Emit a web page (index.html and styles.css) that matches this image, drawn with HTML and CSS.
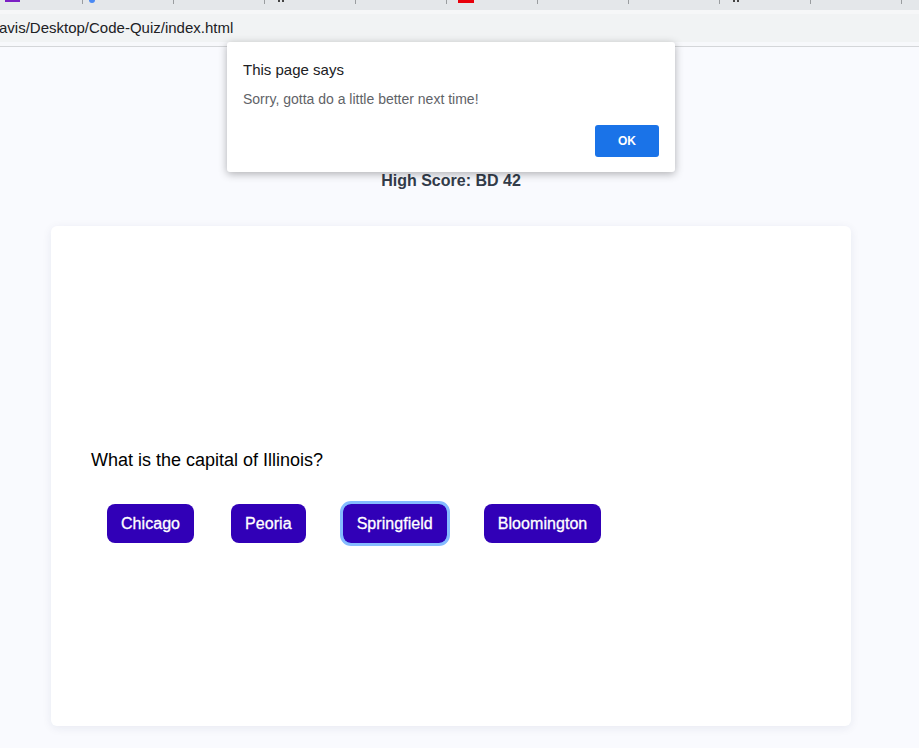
FILE: index.html
```html
<!DOCTYPE html>
<html>
<head>
<meta charset="utf-8">
<link rel="stylesheet" href="styles.css">
</head>
<body>
<div class="chrome">
  <div class="tabs">
    <div class="tab"><span class="fav fav-purple"></span></div>
    <div class="tab"><span class="fav fav-blue"></span></div>
    <div class="tab"></div>
    <div class="tab"><span class="fav fav-marks"></span></div>
    <div class="tab"></div>
    <div class="tab"><span class="fav fav-red"></span></div>
    <div class="tab"></div>
    <div class="tab"></div>
    <div class="tab"><span class="fav fav-marks"></span></div>
    <div class="tab"></div>
  </div>
  <div class="gap"></div>
  <div class="address">avis/Desktop/Code-Quiz/index.html</div>
  <div class="under"></div>
</div>
<main class="page">
  <p class="highscore">High Score: BD 42</p>
  <section class="card">
    <p class="question">What is the capital of Illinois?</p>
    <div class="answers">
      <button class="answer">Chicago</button>
      <button class="answer">Peoria</button>
      <button class="answer focused">Springfield</button>
      <button class="answer">Bloomington</button>
    </div>
  </section>
</main>
<div class="dialog">
  <div class="dialog-title">This page says</div>
  <div class="dialog-msg">Sorry, gotta do a little better next time!</div>
  <div class="dialog-actions"><button class="ok">OK</button></div>
</div>
</body>
</html>
```
FILE: styles.css
```css
html, body {
  margin: 0;
  padding: 0;
}
body {
  width: 919px;
  height: 748px;
  overflow: hidden;
  background: #f9fafe;
  font-family: "Liberation Sans", Arial, sans-serif;
  position: relative;
}
.chrome {
  display: flex;
  flex-direction: column;
}
.tabs {
  height: 10px;
  background: #e4e7ea;
  display: flex;
}
.tab {
  width: 90px;
  border-right: 1px solid #9a9da0;
  height: 4px;
  position: relative;
  flex: none;
}
.tab:first-child {
  width: 82px;
}
.fav {
  position: absolute;
  top: 0;
  display: block;
}
.fav-purple {
  left: 5px;
  width: 15px;
  height: 2px;
  background: #7b1fc4;
}
.fav-blue {
  left: 6px;
  width: 6px;
  height: 3px;
  background: #4a8af4;
  border-radius: 0 0 3px 3px;
}
.fav-red {
  left: 11px;
  width: 16px;
  height: 3px;
  background: #e8000b;
}
.fav-marks {
  left: 13px;
  width: 2px;
  height: 2px;
  background: #444;
  box-shadow: 4px 0 0 #444;
}
.gap {
  height: 4px;
  background: #f6f7f8;
}
.address {
  height: 28px;
  background: #f1f3f4;
  font-size: 15px;
  line-height: 28px;
  color: #202124;
  margin-left: -1px;
}
.under {
  height: 4px;
  background: #f7f8fb;
  border-bottom: 1px solid #d4d6d9;
}
.page {
  display: flex;
  flex-direction: column;
  padding-left: 51px;
}
.highscore {
  margin: 124px 0 0 0;
  width: 800px;
  text-align: center;
  font-weight: bold;
  font-size: 16px;
  line-height: 19px;
  color: #333c4a;
}
.card {
  margin-top: 36px;
  width: 800px;
  height: 500px;
  box-sizing: border-box;
  background: #fff;
  border-radius: 6px;
  box-shadow: 0 2px 10px rgba(30, 40, 90, 0.08);
  padding: 224px 40px 0 40px;
}
.question {
  margin: 0;
  font-size: 18px;
  line-height: 21px;
  color: #000;
}
.answers {
  display: flex;
  gap: 37px;
  margin: 33px 0 0 16px;
}
.answer {
  font-family: "Liberation Sans", Arial, sans-serif;
  font-size: 16px;
  line-height: 19px;
  letter-spacing: 0.05px;
  height: 39px;
  padding: 0 14px;
  border: none;
  border-radius: 8px;
  background: #3100b7;
  color: #fff;
  -webkit-text-stroke: 0.3px #fff;
}
.focused {
  outline: 3px solid #85bbff;
  outline-offset: 0;
  box-shadow: 0 0 0 1px #5a9cf8;
}
.dialog {
  position: absolute;
  left: 227px;
  top: 42px;
  width: 448px;
  height: 130px;
  box-sizing: border-box;
  background: #fff;
  border-radius: 3px;
  box-shadow: 0 2px 8px rgba(0, 0, 0, 0.3);
  padding: 19px 16px 0 16px;
  display: flex;
  flex-direction: column;
}
.dialog-title {
  font-size: 15px;
  line-height: 18px;
  color: #202124;
}
.dialog-msg {
  margin-top: 12px;
  font-size: 14px;
  line-height: 16px;
  color: #5f6368;
}
.dialog-actions {
  display: flex;
  justify-content: flex-end;
  margin-top: 18px;
}
.ok {
  width: 64px;
  height: 32px;
  border: none;
  border-radius: 3px;
  background: #1a73e8;
  color: #fff;
  font-family: "Liberation Sans", Arial, sans-serif;
  font-weight: bold;
  font-size: 12px;
}
```
